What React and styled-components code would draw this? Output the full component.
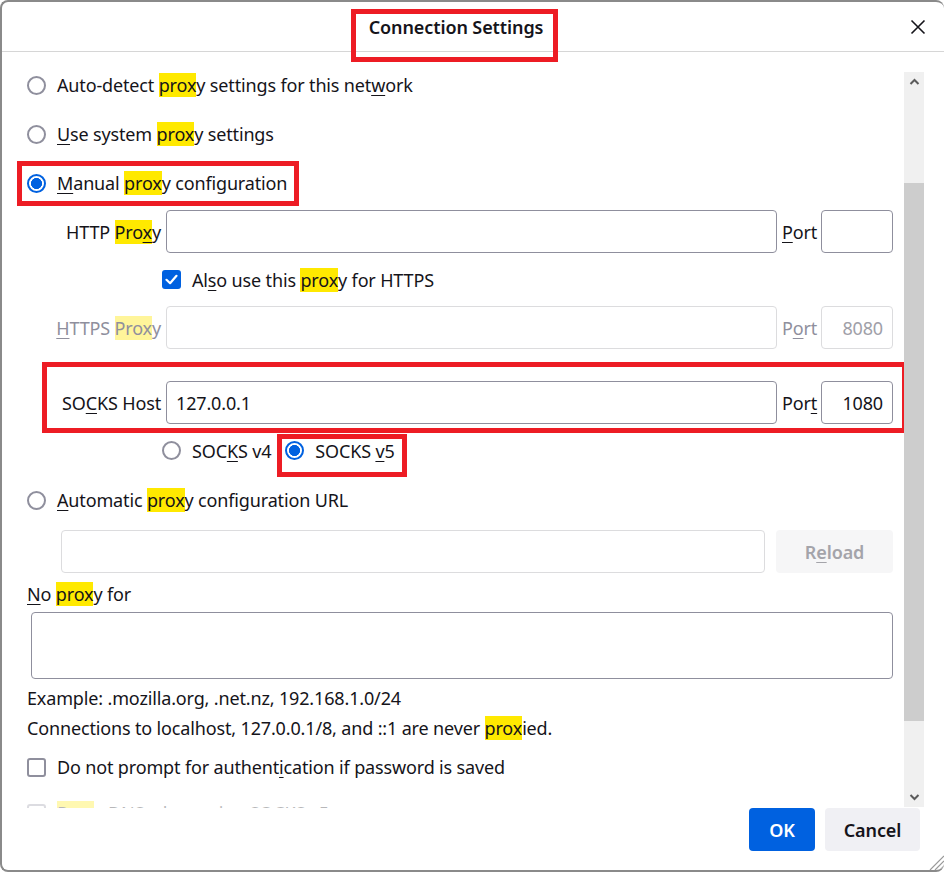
import React from 'react'
import styled, { createGlobalStyle } from 'styled-components'

const GlobalStyle = createGlobalStyle`
  html, body {
    margin: 0;
    padding: 0;
    background: #fff;
  }
  body {
    font-family: "Noto Sans", "Open Sans", sans-serif;
    font-size: 18px;
    color: #15141a;
  }
  * { box-sizing: border-box; }
`

const Dialog = styled.div`
  width: 944px;
  height: 872px;
  border: 2px solid #8a8a8a;
  border-right: none;
  border-radius: 8px;
  display: flex;
  flex-direction: column;
  overflow: hidden;
  background: #fff;
  position: relative;
`

const Header = styled.div`
  height: 50px;
  flex: none;
  display: flex;
  align-items: center;
  border-bottom: 1px solid #d6d6d6;
`

const TitleArea = styled.div`
  flex: 1;
  display: flex;
  justify-content: center;
`

const Title = styled.span`
  font-size: 18px;
  font-weight: 600;
  line-height: 24px;
  letter-spacing: -0.1px;
`

const CloseButton = styled.div`
  width: 34px;
  height: 16px;
  display: flex;
  align-items: center;
`

// red annotation frame drawn over the marked control
const Marked = styled.span`
  position: relative;
  display: inline-flex;
  margin-left: ${(p) => p.$ml || 0}px;
  &::after {
    content: '';
    position: absolute;
    top: ${(p) => p.$t}px;
    right: ${(p) => p.$r}px;
    bottom: ${(p) => p.$b}px;
    left: ${(p) => p.$l}px;
    border: 5px solid #ed1c24;
    pointer-events: none;
    z-index: 2;
  }
`

const Body = styled.div`
  flex: 1;
  display: flex;
  min-height: 0;
`

const Pane = styled.div`
  flex: 1;
  min-width: 0;
  overflow: hidden;
  padding: 20px 11px 0 25px;
  display: flex;
  flex-direction: column;
`

const Scrollbar = styled.div`
  width: 20px;
  margin: 20px 20px 0 0;
  height: 735px;
  background: #f0f0f0;
  display: flex;
  flex-direction: column;
`

const ScrollArrow = styled.div`
  height: 20px;
  display: flex;
  align-items: center;
  justify-content: center;
  flex: none;
`

const ScrollThumb = styled.div`
  margin-top: ${(p) => p.$top}px;
  height: ${(p) => p.$h}px;
  background: #cdcdcd;
  flex: none;
`

const Spacer = styled.div`
  flex: 1;
`

const OptionRow = styled.div`
  display: flex;
  align-items: center;
  gap: 11px;
  height: 26px;
  margin-top: ${(p) => p.$mt || 0}px;
  flex: none;
  opacity: ${(p) => p.$faded ? 0.3 : 1};
`

const Radio = styled.span`
  width: 19px;
  height: 19px;
  border-radius: 50%;
  flex: none;
  border: 2px solid ${(p) => p.$checked ? '#0061e0' : '#8f8f9d'};
  background: ${(p) => p.$checked ? 'radial-gradient(circle, #0061e0 0 5.3px, #fff 5.8px)' : '#fff'};
`

const Check = styled.span`
  width: 19px;
  height: 19px;
  border-radius: 3px;
  flex: none;
  display: flex;
  align-items: center;
  justify-content: center;
  border: ${(p) => p.$checked ? 'none' : '2px solid #8f8f9d'};
  background: ${(p) => p.$checked ? '#0061e0' : '#fff'};
`

const Text = styled.span`
  white-space: nowrap;
  line-height: 24px;
  letter-spacing: -0.15px;
  color: ${(p) => p.$disabled ? '#8f8f9d' : '#15141a'};
  u {
    text-decoration-thickness: 1px;
    text-underline-offset: 3px;
  }
`

const Hl = styled.span`
  background: ${(p) => p.$dim ? '#fff59a' : '#ffe900'};
`

const ProxyGrid = styled.div`
  display: grid;
  grid-template-columns: 134px 1fr 34px 72px;
  grid-template-rows: 43px 43px 43px 22px 43px 43px;
  column-gap: 5px;
  row-gap: 5px;
  margin-top: 14px;
  flex: none;
  align-items: center;
`

const FieldLabel = styled(Text)`
  align-self: stretch;
  display: flex;
  align-items: center;
  justify-content: flex-end;
  position: relative;
  ${(p) => p.$framed && `
    &::after {
      content: '';
      position: absolute;
      top: -19px;
      bottom: -9px;
      left: 15px;
      right: -746px;
      border: 5px solid #ed1c24;
      z-index: 2;
    }
  `}
`

const PortLabel = styled(Text)`
  justify-self: start;
`

const Input = styled.div`
  height: 43px;
  border: 1px solid ${(p) => p.$disabled ? '#dcdcde' : '#8f8f9d'};
  border-radius: 4px;
  display: flex;
  align-items: center;
  justify-content: ${(p) => p.$right ? 'flex-end' : 'flex-start'};
  padding: 0 9px;
  color: ${(p) => p.$disabled ? '#a0a0a8' : '#15141a'};
  letter-spacing: -0.15px;
  background: #fff;
  flex: ${(p) => p.$grow ? 1 : 'none'};
`

const GridLine = styled.div`
  grid-column: 2 / -1;
  display: flex;
  align-items: center;
  margin-left: -4px;
  gap: 11px;
`

const GridGap = styled.div`
  grid-column: 1 / -1;
`

const UrlRow = styled.div`
  display: flex;
  gap: 11px;
  margin: 17px 0 0 34px;
  flex: none;
`

const Button = styled.div`
  height: 43px;
  border-radius: 4px;
  display: flex;
  align-items: center;
  justify-content: center;
  font-weight: 600;
  font-size: 18px;
  letter-spacing: -0.1px;
  width: ${(p) => p.$w}px;
  flex: none;
  background: ${(p) => p.$primary ? '#0061e0' : p.$disabled ? '#f6f6f7' : '#f0f0f4'};
  color: ${(p) => p.$primary ? '#fff' : p.$disabled ? '#a4a4aa' : '#15141a'};
  u {
    text-underline-offset: 3px;
    text-decoration-thickness: 1px;
  }
`

const TextArea = styled.div`
  height: 67px;
  margin: 5px 0 0 4px;
  border: 1px solid #8f8f9d;
  border-radius: 4px;
  flex: none;
`

const Note = styled(Text)`
  display: block;
  height: 26px;
  line-height: 26px;
  margin-top: ${(p) => p.$mt}px;
  flex: none;
`

const Footer = styled.div`
  height: 62px;
  flex: none;
  display: flex;
  justify-content: flex-end;
  gap: 10px;
  padding: 0 24px 0 0;
  position: relative;
`

const Grip = styled.svg`
  position: absolute;
  right: 0;
  bottom: 0;
`

const Chevron = ({ up }) => (
  <svg width="11" height="8" viewBox="0 0 11 8">
    <path d={up ? 'M1.5 6L5.5 2l4 4' : 'M1.5 2l4 4 4-4'} fill="none" stroke="#5b5b5b" strokeWidth="2" />
  </svg>
)

const Tick = () => (
  <svg width="13" height="11" viewBox="0 0 13 11">
    <path d="M1.5 5.8l3.6 3.4L11.5 1.8" fill="none" stroke="#fff" strokeWidth="2.2" strokeLinecap="round" strokeLinejoin="round" />
  </svg>
)

const App = () => {
  return (
    <>
      <GlobalStyle />
      <Dialog>
        <Header>
          <TitleArea>
            <Marked $t={-6} $r={-15} $b={-23} $l={-18}>
              <Title>Connection Settings</Title>
            </Marked>
          </TitleArea>
          <CloseButton>
            <svg width="16" height="16" viewBox="0 0 16 16">
              <path d="M1.5 1.5l13 13M14.5 1.5l-13 13" stroke="#15141a" strokeWidth="1.6" />
            </svg>
          </CloseButton>
        </Header>
        <Body>
          <Pane>
            <OptionRow>
              <Radio />
              <Text>Auto-detect <Hl>prox</Hl>y settings for this net<u>w</u>ork</Text>
            </OptionRow>
            <OptionRow $mt={23}>
              <Radio />
              <Text><u>U</u>se system <Hl>prox</Hl>y settings</Text>
            </OptionRow>
            <OptionRow $mt={23}>
              <Marked $t={-9} $r={-12} $b={-10} $l={-10}>
                <OptionRow>
                  <Radio $checked />
                  <Text><u>M</u>anual <Hl>prox</Hl>y configuration</Text>
                </OptionRow>
              </Marked>
            </OptionRow>

            <ProxyGrid>
              <FieldLabel><span>HTTP <Hl>Pro<u>x</u></Hl>y</span></FieldLabel>
              <Input />
              <PortLabel><u>P</u>ort</PortLabel>
              <Input />

              <GridLine>
                <Check $checked><Tick /></Check>
                <Text>Al<u>s</u>o use this <Hl>prox</Hl>y for HTTPS</Text>
              </GridLine>

              <FieldLabel $disabled><span><u>H</u>TTPS <Hl $dim>Prox</Hl>y</span></FieldLabel>
              <Input $disabled />
              <PortLabel $disabled>P<u>o</u>rt</PortLabel>
              <Input $disabled $right>8080</Input>

              <GridGap />

              <FieldLabel $framed><span>SO<u>C</u>KS Host</span></FieldLabel>
              <Input>127.0.0.1</Input>
              <PortLabel>Por<u>t</u></PortLabel>
              <Input $right>1080</Input>

              <GridLine>
                <Radio />
                <Text>SOC<u>K</u>S v4</Text>
                <Marked $ml={3} $t={-4} $r={-12} $b={-13} $l={-8}>
                  <OptionRow>
                    <Radio $checked />
                    <Text>SOCKS <u>v</u>5</Text>
                  </OptionRow>
                </Marked>
              </GridLine>
            </ProxyGrid>

            <OptionRow $mt={15}>
              <Radio />
              <Text><u>A</u>utomatic <Hl>prox</Hl>y configuration URL</Text>
            </OptionRow>
            <UrlRow>
              <Input $disabled $grow />
              <Button $disabled $w={117}>R<u>e</u>load</Button>
            </UrlRow>

            <Note $mt={8}><u>N</u>o <Hl>prox</Hl>y for</Note>
            <TextArea />
            <Note $mt={6}>Example: .mozilla.org, .net.nz, 192.168.1.0/24</Note>
            <Note $mt={4}>Connections to localhost, 127.0.0.1/8, and ::1 are never <Hl>prox</Hl>ied.</Note>

            <OptionRow $mt={13}>
              <Check />
              <Text>Do not prompt for authent<u>i</u>cation if password is saved</Text>
            </OptionRow>
            <OptionRow $mt={20} $faded>
              <Check />
              <Text><Hl>Prox</Hl>y DNS when using SOCKS v5</Text>
            </OptionRow>
          </Pane>
          <Scrollbar>
            <ScrollArrow><Chevron up /></ScrollArrow>
            <ScrollThumb $top={91} $h={538} />
            <Spacer />
            <ScrollArrow><Chevron /></ScrollArrow>
          </Scrollbar>
        </Body>
        <Footer>
          <Button $primary $w={66}>OK</Button>
          <Button $w={95}>Cancel</Button>
          <Grip width="18" height="16" viewBox="0 0 18 16">
            <path d="M4 16L18 2M9 16L18 7M14 16l4-4" stroke="#9a9a9a" strokeWidth="1.2" />
          </Grip>
        </Footer>
      </Dialog>
    </>
  )
}

export default App
